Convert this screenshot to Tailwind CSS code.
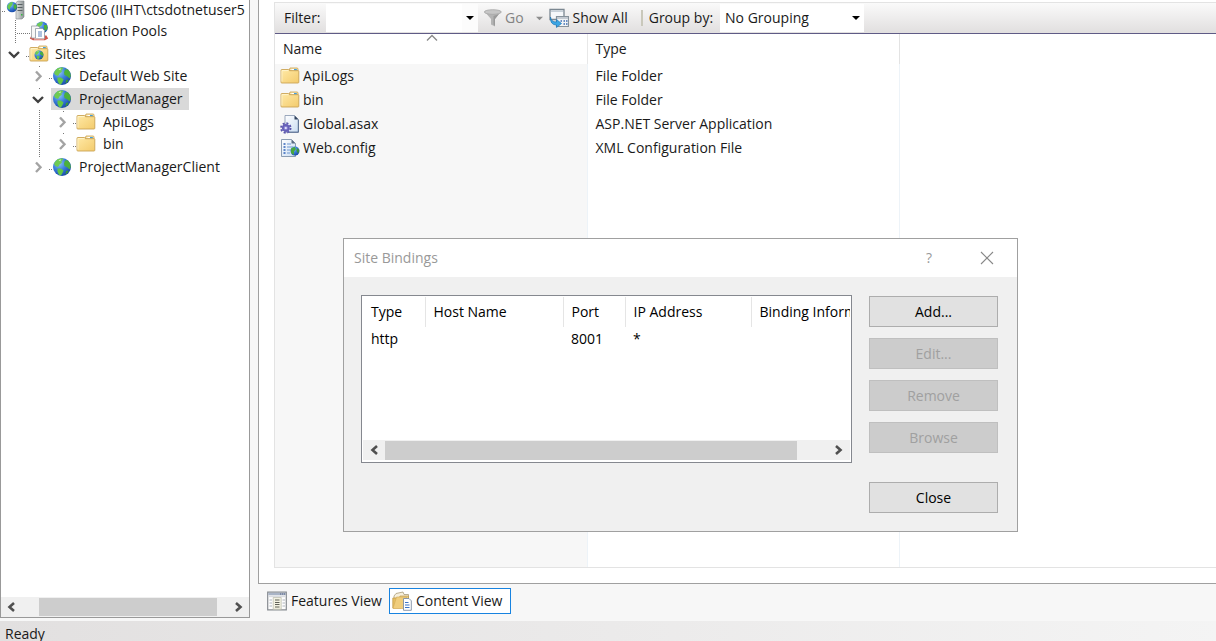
<!DOCTYPE html>
<html lang="en">
<head>
<meta charset="utf-8">
<meta name="viewport" content="width=device-width, initial-scale=1">
<title>Internet Information Services (IIS) Manager</title>
<script src="https://cdn.jsdelivr.net/npm/@tailwindcss/browser@4"></script>
</head>
<body class="relative flex h-screen flex-col overflow-hidden bg-[#f7f7f7] font-['Open_Sans','Noto_Sans',sans-serif] text-sm leading-5 text-[#1a1a1a]">

<svg class="absolute size-0" aria-hidden="true">
  <defs>
    <radialGradient id="sea" cx=".35" cy=".3" r=".75"><stop offset="0" stop-color="#8cc4f4"/><stop offset=".5" stop-color="#3a7ddb"/><stop offset="1" stop-color="#1748a4"/></radialGradient>
    <linearGradient id="fold" x1="0" y1="0" x2="1" y2="1"><stop offset="0" stop-color="#ffe9a6"/><stop offset="1" stop-color="#f3cb6c"/></linearGradient>
    <linearGradient id="page" x1="0" y1="0" x2="1" y2="1"><stop offset="0" stop-color="#ffffff"/><stop offset="1" stop-color="#c9dcf2"/></linearGradient>
    <linearGradient id="steel" x1="0" y1="0" x2="1" y2="0"><stop offset="0" stop-color="#dfe3e3"/><stop offset="1" stop-color="#8f9697"/></linearGradient>
    <symbol id="globe" viewBox="0 0 20 20">
      <circle cx="10" cy="10" r="9" fill="url(#sea)"/>
      <path d="M2.500 5.500 5.500 2.200 10 1.200 11.500 2.500 9.500 4 9.800 5.800 7.500 7.500 6 10 3.500 9 2.200 7.500z" fill="#6fcb52"/>
      <path d="M13 3.500 15.500 3.200 18 6 18.800 10 17.500 12.500 15.500 10.500 12.500 9 12 6.500z" fill="#4cb03c"/>
      <path d="M5.500 11.500 9 11.500 11.500 13.500 10.500 16 9 18.500 6.800 17.800 5.500 14.500z" fill="#62c746"/>
      <path d="M14 14 16.500 13.500 15.500 16 13.500 17.500z" fill="#3c9b35"/>
      <path d="M6.500 3.500 9 2.200 8.300 4.200z" fill="#d2f3c0"/>
    </symbol>
    <symbol id="folder" viewBox="0 0 20 20">
      <path d="M10 2h7q1 0 1 1v2H9z" fill="#f8e6b0" stroke="#c99f4b" stroke-width=".8"/>
      <path d="M11.500 3h4v1.400h-4z" fill="#fff"/><path d="M14 3h2.800v1.400H14z" fill="#3f9ede"/>
      <path d="M1 4.300q0-.8.8-.8H8.500l1 1.200h8.500q.8 0 .8.800v10.700q0 .8-.8.800H1.800q-.8 0-.8-.8z" fill="url(#fold)" stroke="#cba455" stroke-width=".9"/>
      <path d="M2 4.600H8.500M1.900 4.600v11" stroke="#fff7d8" stroke-width=".8" fill="none"/>
    </symbol>
    <symbol id="server" viewBox="0 0 20 20">
      <path d="M11 2.500 13 1h6v16l-2 2h-6z" fill="url(#steel)" stroke="#7d8587" stroke-width=".6"/>
      <path d="M12.500 4.500h5M12.500 7.500h5M12.500 10.500h5" stroke="#596164" stroke-width="1.100"/>
      <path d="M16 14h1.500v1.500H16z" fill="#33b63d"/>
      <circle cx="7" cy="7" r="5.200" fill="url(#sea)"/>
      <path d="M2.500 5.500 5.500 2.300 8 2.300 7.200 5 5.200 7.500 4.700 10 2.400 8z" fill="#68cc50"/><path d="M8.700 4.500 11 4.200 12 7 10.200 10 8.700 7.500z" fill="#4bb03d"/>
    </symbol>
    <symbol id="pools" viewBox="0 0 20 20">
      <circle cx="12.800" cy="6.500" r="6" fill="url(#sea)"/>
      <path d="M8 3 12 .8 14 1.500 12.500 4.500 10 6 8 7z" fill="#6fcb52"/><path d="M15 4 18 4 18.500 8 16 10 15 7z" fill="#4cb03c"/>
      <path d="M2.500 14.500 .8 17.500 4 19.200 16 19.200 19.200 17.500 17.500 14.500z" fill="#cf554b"/>
      <path d="M2.500 5h6.500l1.500 1.500v10.500H2.500z" fill="#f7f7f7" stroke="#9a9fa4" stroke-width=".8"/>
      <path d="M6.500 7.500h7l2 2v8H6.500z" fill="#fff" stroke="#8d97a2" stroke-width=".8"/>
      <path d="M9 11h4M9 13h4M9 15h4" stroke="#5c83bd" stroke-width="1"/>
      <path d="M5 18h10" stroke="#f2d6d2" stroke-width="1"/>
    </symbol>
    <symbol id="asax" viewBox="0 0 20 20">
      <path d="M5 1.500h9.500l4 4v12.800H5z" fill="url(#page)" stroke="#8494ad" stroke-width=".8"/>
      <path d="M14.500 1.500v4h4z" fill="#33445e"/>
      <path d="M18.300 6v12.200H9" stroke="#53698d" fill="none"/>
      <circle cx="5.800" cy="14" r="4.700" fill="none" stroke="#5c56ad" stroke-width="2" stroke-dasharray="2 1.690"/>
      <circle cx="5.800" cy="14" r="3" fill="#8a86d6" stroke="#6660b8" stroke-width="1.800"/>
      <circle cx="5.800" cy="14" r="1.100" fill="#ece9ff"/>
    </symbol>
    <symbol id="config" viewBox="0 0 20 20">
      <path d="M1.500 1.500h10l4 4v13h-14z" fill="url(#page)" stroke="#8093aa" stroke-width=".9"/>
      <path d="M11.500 1.500v4h4z" fill="#5a6c82"/>
      <path d="M3.500 6h2M3.500 9h2M3.500 12h2M3.500 15h2" stroke="#2f62b8" stroke-width="1.300"/>
      <path d="M7 6h4M7 9h6M7 12h4M7 15h3" stroke="#6e98d0" stroke-width="1.200"/>
      <circle cx="15" cy="13" r="4.500" fill="url(#sea)"/>
      <path d="M11 10.500 14.500 8.700 16 11 14 13.500 14 17 11 15z" fill="#48a83e"/><path d="M17 10 19.300 12 18.300 15.500 16.500 13z" fill="#3c9a38"/>
    </symbol>
    <symbol id="showall" viewBox="0 0 20 20">
      <path d="M1 1.500h14v10H1z" fill="#f6f8fa" stroke="#7b8791" stroke-width="1.300"/>
      <path d="M2 3.200h12" stroke="#c5ced6" stroke-width="1.500"/>
      <path d="M7.500 8.500h12v10h-12z" fill="#f1f4f6" stroke="#87929b" stroke-width="1.200"/>
      <path d="M8 10h11" stroke="#b4bdc5" stroke-width="1.500"/>
      <path d="M11.500 13h1.500M14.500 13h1.500M17 13h1.500M14.500 16h1.500M17 16h1.500" stroke="#3d6bb3" stroke-width="1.500"/>
      <path d="M1.500 9q.5 5 6 5v-2.500l5 4-5 4V17Q1 17 1.500 9z" fill="#3ba6e4" stroke="#1d77b8" stroke-width=".7"/>
    </symbol>
    <symbol id="funnel" viewBox="0 0 20 20">
      <path d="M1.500 3.500 8 11v5.500l4 2V11L18 3.500z" fill="#b4b4b4"/>
      <ellipse cx="9.800" cy="4" rx="8.500" ry="2.300" fill="#c6c6c6" stroke="#a6a6a6" stroke-width=".8"/>
      <path d="M10.500 8v8.500l1.500 1.500v-7l4-5z" fill="#9a9a9a"/>
    </symbol>
    <symbol id="features" viewBox="0 0 20 20">
      <path d="M.7 1.200h18.600v17.600H.7z" fill="#fdfdfd" stroke="#868b90" stroke-width="1.200"/>
      <path d="M1.300 1.800h17.400v2.400H1.300z" fill="#a9b4c6"/><path d="M13 3h1.200M15 3h1.200M17 3h1.200" stroke="#526181" stroke-width="1.200"/>
      <path d="M1.300 4.500h17.400v1.700H1.300z" fill="#d9dce0"/>
      <path d="M6.200 6.500h8v11.800h-8z" fill="#f3f2e2" stroke="#b8b9a9" stroke-width=".7"/>
      <path d="M8 9h4.500M8 11.500h4.500M8 13.500h4.500M8 16h4.500" stroke="#5f6057" stroke-width="1.100"/>
      <path d="M2.500 9H5M2.500 12H5M2.500 15H5M15.500 9H18M15.500 12H18M15.500 15H18" stroke="#aeb5bd" stroke-width="1"/>
    </symbol>
    <symbol id="content" viewBox="0 0 20 20">
      <path d="M4 2.500 11 1l1 2.500h4.500V15H2V5z" fill="#f7f0dc" stroke="#a99a78" stroke-width=".8"/>
      <path d="M8 5h8.500v11H5z" fill="#e9cf8a" stroke="#bd9747" stroke-width=".7"/>
      <path d="M.8 7h7l1 2.500V17H.8z" fill="#e6bf62" stroke="#c39c4b" stroke-width=".8"/>
      <path d="M1 17.500 4.500 6h10l-2.500 11.500z" fill="#f0cd7c" stroke="#d3aa55" stroke-width=".6"/>
      <path d="M11.500 7.500h5.500l2.300 2.300v9.500h-7.800z" fill="#fff" stroke="#7f8fa5" stroke-width=".9"/>
      <path d="M13 11.500h3.500M13 14h4.500M13 16.500h4.500" stroke="#3d74c8" stroke-width="1.200"/>
    </symbol>
    <symbol id="closed" viewBox="0 0 16 16"><path d="M5 3.500 9.500 8.300 5 13" fill="none" stroke="#a3a3a3" stroke-width="2.400"/></symbol>
    <symbol id="open" viewBox="0 0 16 16"><path d="M3 6 8 10.800 13 6" fill="none" stroke="#404040" stroke-width="2.400"/></symbol>
    <symbol id="left" viewBox="0 0 16 16"><path d="M11 4 6.500 8 11 12" fill="none" stroke="#505050" stroke-width="2.600"/></symbol>
    <symbol id="right" viewBox="0 0 16 16"><path d="M5 4 9.500 8 5 12" fill="none" stroke="#505050" stroke-width="2.600"/></symbol>
    <symbol id="drop" viewBox="0 0 8 8"><path d="M0 2h8L4 6z" fill="currentColor"/></symbol>
  </defs>
</svg>

<div class="flex min-h-0 flex-1">
  <!-- Connections tree -->
  <nav aria-label="Connections" class="mb-[3px] flex w-[250px] shrink-0 flex-col overflow-hidden border-x border-b border-[#999] bg-white">
    <div class="relative flex-1 overflow-hidden">
      <svg class="absolute top-0 left-0 h-[180px] w-20" aria-hidden="true" fill="none" stroke="#777" stroke-dasharray="1 1">
        <path d="M1 11.500h4M14.500 20v24M16 33.500h13M25 56.500h4M38.500 66v2M38.500 88v2M48 78.500h4M38.500 110v48M62.500 111v2M62.500 133v2M72 123.500h4M72 146.500h4M48 169.500h4"/>
      </svg>
      <ul role="tree" class="relative grid h-[178px] grid-rows-[20px_repeat(7,minmax(0,1fr))] whitespace-nowrap">
        <li role="treeitem" class="flex items-center pl-1"><svg class="mr-1.5 size-5 shrink-0"><use href="#server"/></svg>DNETCTS06 (IIHT\ctsdotnetuser5</li>
        <li role="treeitem" class="flex items-center pl-7"><svg class="mr-1.5 size-5 shrink-0"><use href="#pools"/></svg>Application Pools</li>
        <li role="treeitem" aria-expanded="true" class="flex items-center pl-[5px]"><button aria-label="Collapse Sites" class="mr-[7px] size-4"><svg class="size-4"><use href="#open"/></svg></button><svg class="mr-1.5 size-5 shrink-0"><use href="#folder"/><use href="#globe" x="5" y="6" width="10" height="10"/></svg>Sites</li>
        <li role="treeitem" aria-expanded="false" class="flex items-center pl-[30px]"><button aria-label="Expand Default Web Site" class="mr-[5px] size-4"><svg class="size-4"><use href="#closed"/></svg></button><svg class="mr-[7px] size-5 shrink-0"><use href="#globe"/></svg>Default Web Site</li>
        <li role="treeitem" aria-expanded="true" aria-selected="true" class="flex items-center pl-[29px]"><button aria-label="Collapse ProjectManager" class="mr-[5px] size-4"><svg class="size-4"><use href="#open"/></svg></button><span class="flex h-[22px] items-center bg-[#d9d9d9] pr-1.5 pl-px"><svg class="mr-[7px] size-5 shrink-0"><use href="#globe"/></svg>ProjectManager</span></li>
        <li role="treeitem" aria-expanded="false" class="flex items-center pl-[54px]"><button aria-label="Expand ApiLogs" class="mr-[5px] size-4"><svg class="size-4"><use href="#closed"/></svg></button><svg class="mr-[7px] size-5 shrink-0"><use href="#folder"/></svg>ApiLogs</li>
        <li role="treeitem" aria-expanded="false" class="flex items-center pl-[54px]"><button aria-label="Expand bin" class="mr-[5px] size-4"><svg class="size-4"><use href="#closed"/></svg></button><svg class="mr-[7px] size-5 shrink-0"><use href="#folder"/></svg>bin</li>
        <li role="treeitem" aria-expanded="false" class="flex items-center pl-[30px]"><button aria-label="Expand ProjectManagerClient" class="mr-[5px] size-4"><svg class="size-4"><use href="#closed"/></svg></button><svg class="mr-[7px] size-5 shrink-0"><use href="#globe"/></svg>ProjectManagerClient</li>
      </ul>
    </div>
    <div class="flex h-5 items-center bg-[#f0f0f0]">
      <button aria-label="Scroll left" class="flex w-[38px] pl-0.5"><svg class="size-4"><use href="#left"/></svg></button>
      <div class="h-[18px] flex-1 bg-[#cdcdcd]"></div>
      <button aria-label="Scroll right" class="flex w-8 justify-end pr-0.5"><svg class="size-4"><use href="#right"/></svg></button>
    </div>
  </nav>

  <!-- Content view -->
  <main class="ml-2 flex min-w-0 flex-1 flex-col">
    <div class="flex min-h-0 flex-1 flex-col border-b border-l border-[#a0a0a0] bg-white pt-0.5 pb-[15px] pl-[15px]">
      <div class="flex min-h-0 flex-1 flex-col border border-r-0 border-[#e3e3e3]">
        <div class="flex h-[31px] shrink-0 items-center border-b border-[#5f5b86] bg-linear-to-b from-[#fafafa] to-[#e1dfdf] whitespace-nowrap">
          <label for="filter" class="w-[51px] pl-[9px]">Filter:</label>
          <div class="flex h-7 w-[152px] bg-white">
            <input id="filter" type="text" class="min-w-0 flex-1 px-1 outline-none">
            <button aria-label="Filter history" class="flex w-4 items-center justify-center bg-[#fcfcfc] text-black"><svg class="size-2"><use href="#drop"/></svg></button>
          </div>
          <button disabled class="ml-[5px] flex items-center text-[#838383]"><svg class="mr-0.5 size-5"><use href="#funnel"/></svg>Go</button>
          <button disabled aria-label="Go options" class="ml-3 text-[#8d8d8d]"><svg class="size-[7px]"><use href="#drop"/></svg></button>
          <button class="ml-1.5 flex items-center"><svg class="mr-1 size-5"><use href="#showall"/></svg>Show All</button>
          <span class="ml-[13px] h-4 w-0.5 bg-[#c9c8bb]"></span>
          <label for="group" class="ml-1.5">Group by:</label>
          <div class="relative ml-[7px] h-7 w-36 bg-white">
            <select id="group" class="h-full w-full appearance-none bg-transparent pl-[5px] outline-none"><option>No Grouping</option></select>
            <svg class="pointer-events-none absolute top-2.5 right-1 size-2 text-black" aria-hidden="true"><use href="#drop"/></svg>
          </div>
        </div>
        <table class="h-full w-full table-fixed border-collapse text-left whitespace-nowrap">
          <colgroup><col class="w-[312px]"><col class="w-[312px]"><col></colgroup>
          <thead>
            <tr class="h-[30px]">
              <th scope="col" class="relative border-r border-[#e8e8e8] p-0 pl-2 font-normal">Name<svg class="absolute top-0 left-[151px] h-2 w-3" aria-label="Sorted ascending" viewBox="0 0 12 8"><path d="M1 6.500 6 1.500 11 6.500" fill="none" stroke="#888" stroke-width="1.300"/></svg></th>
              <th scope="col" class="border-r border-[#e3e3e3] p-0 pl-2 font-normal">Type</th>
              <td></td>
            </tr>
          </thead>
          <tbody>
            <tr class="h-6"><td class="border-r border-[#edf3f8] bg-[#f7f7f7] p-0 pl-[5px]"><span class="flex items-center"><svg class="mr-[3px] size-5"><use href="#folder"/></svg>ApiLogs</span></td><td class="border-r border-[#edf3f8] p-0 pl-2">File Folder</td><td></td></tr>
            <tr class="h-6"><td class="border-r border-[#edf3f8] bg-[#f7f7f7] p-0 pl-[5px]"><span class="flex items-center"><svg class="mr-[3px] size-5"><use href="#folder"/></svg>bin</span></td><td class="border-r border-[#edf3f8] p-0 pl-2">File Folder</td><td></td></tr>
            <tr class="h-6"><td class="border-r border-[#edf3f8] bg-[#f7f7f7] p-0 pl-[5px]"><span class="flex items-center"><svg class="mr-[3px] size-5"><use href="#asax"/></svg>Global.asax</span></td><td class="border-r border-[#edf3f8] p-0 pl-2">ASP.NET Server Application</td><td></td></tr>
            <tr class="h-6"><td class="border-r border-[#edf3f8] bg-[#f7f7f7] p-0 pl-[5px]"><span class="flex items-center"><svg class="mr-[3px] size-5"><use href="#config"/></svg>Web.config</span></td><td class="border-r border-[#edf3f8] p-0 pl-2">XML Configuration File</td><td></td></tr>
            <tr aria-hidden="true"><td class="border-r border-[#edf3f8] bg-[#f7f7f7]"></td><td class="border-r border-[#edf3f8]"></td><td></td></tr>
          </tbody>
        </table>
      </div>
    </div>
    <div class="flex h-[37px] shrink-0 items-start gap-[7px] pt-1 pl-[9px] whitespace-nowrap">
      <button class="flex h-[26px] items-center"><svg class="mr-1 size-5"><use href="#features"/></svg>Features View</button>
      <button aria-pressed="true" class="flex h-[26px] items-center border border-[#1883e0] bg-white pr-2 pl-0.5"><svg class="mr-1 size-5"><use href="#content"/></svg>Content View</button>
    </div>
  </main>
</div>

<footer class="h-5 shrink-0 bg-linear-to-r from-[#e2e0e0] to-[#f4f4f4] pt-[3px] pl-[5px]">Ready</footer>

<!-- Site Bindings dialog -->
<section role="dialog" aria-labelledby="dlg-title" class="absolute top-[238px] left-[343px] w-[675px] border border-[#a0a0a0] bg-[#f0f0f0]">
  <header class="flex h-[38px] items-center bg-white pr-5 pl-2.5 text-[#999]">
    <h1 id="dlg-title" class="flex-1">Site Bindings</h1>
    <button aria-label="Help" class="w-5">?</button>
    <button aria-label="Close dialog" class="ml-[38px]"><svg class="size-5" viewBox="0 0 20 20"><path d="M4 4 16 16M16 4 4 16" stroke="#888" stroke-width="1.100"/></svg></button>
  </header>
  <div class="flex items-start gap-[17px] pt-[18px] pr-[19px] pb-[18px] pl-[17px]">
    <div class="flex h-[168px] min-w-0 flex-1 flex-col border border-[#85888f] bg-white pb-0.5">
      <div class="mr-px flex-1 overflow-hidden pt-px">
        <table class="w-[600px] table-fixed border-collapse text-left whitespace-nowrap text-black">
          <colgroup><col class="w-[63px]"><col class="w-[138px]"><col class="w-[62px]"><col class="w-[126px]"><col></colgroup>
          <thead><tr class="h-[30px]">
            <th scope="col" class="border-r border-[#e5e5e5] p-0 pl-[9px] font-normal">Type</th>
            <th scope="col" class="border-r border-[#e5e5e5] p-0 pl-2 font-normal">Host Name</th>
            <th scope="col" class="border-r border-[#e5e5e5] p-0 pl-2 font-normal">Port</th>
            <th scope="col" class="border-r border-[#e5e5e5] p-0 pl-2 font-normal">IP Address</th>
            <th scope="col" class="p-0 pl-2 font-normal">Binding Information</th>
          </tr></thead>
          <tbody><tr class="h-6"><td class="p-0 pl-[9px]">http</td><td></td><td class="p-0 pl-2">8001</td><td class="p-0 pl-2">*</td><td></td></tr></tbody>
        </table>
      </div>
      <div class="mx-px flex h-5 items-center bg-[#f0f0f0]">
        <button aria-label="Scroll left" class="flex w-[22px] justify-center"><svg class="size-4"><use href="#left"/></svg></button>
        <div class="h-[19px] flex-1 bg-[#cdcdcd]"></div>
        <button aria-label="Scroll right" class="flex w-[53px] justify-end pr-[3px]"><svg class="size-4"><use href="#right"/></svg></button>
      </div>
    </div>
    <div class="mt-px flex w-[129px] flex-col gap-[11px]">
      <button class="h-[31px] border border-[#adadad] bg-[#e1e1e1] text-black">Add...</button>
      <button disabled class="h-[31px] border border-[#bfbfbf] bg-[#cccccc] text-[#a0a0a0]">Edit...</button>
      <button disabled class="h-[31px] border border-[#bfbfbf] bg-[#cccccc] text-[#a0a0a0]">Remove</button>
      <button disabled class="h-[31px] border border-[#bfbfbf] bg-[#cccccc] text-[#a0a0a0]">Browse</button>
      <button class="mt-[18px] h-[31px] border border-[#adadad] bg-[#e1e1e1] text-black">Close</button>
    </div>
  </div>
</section>
</body>
</html>
